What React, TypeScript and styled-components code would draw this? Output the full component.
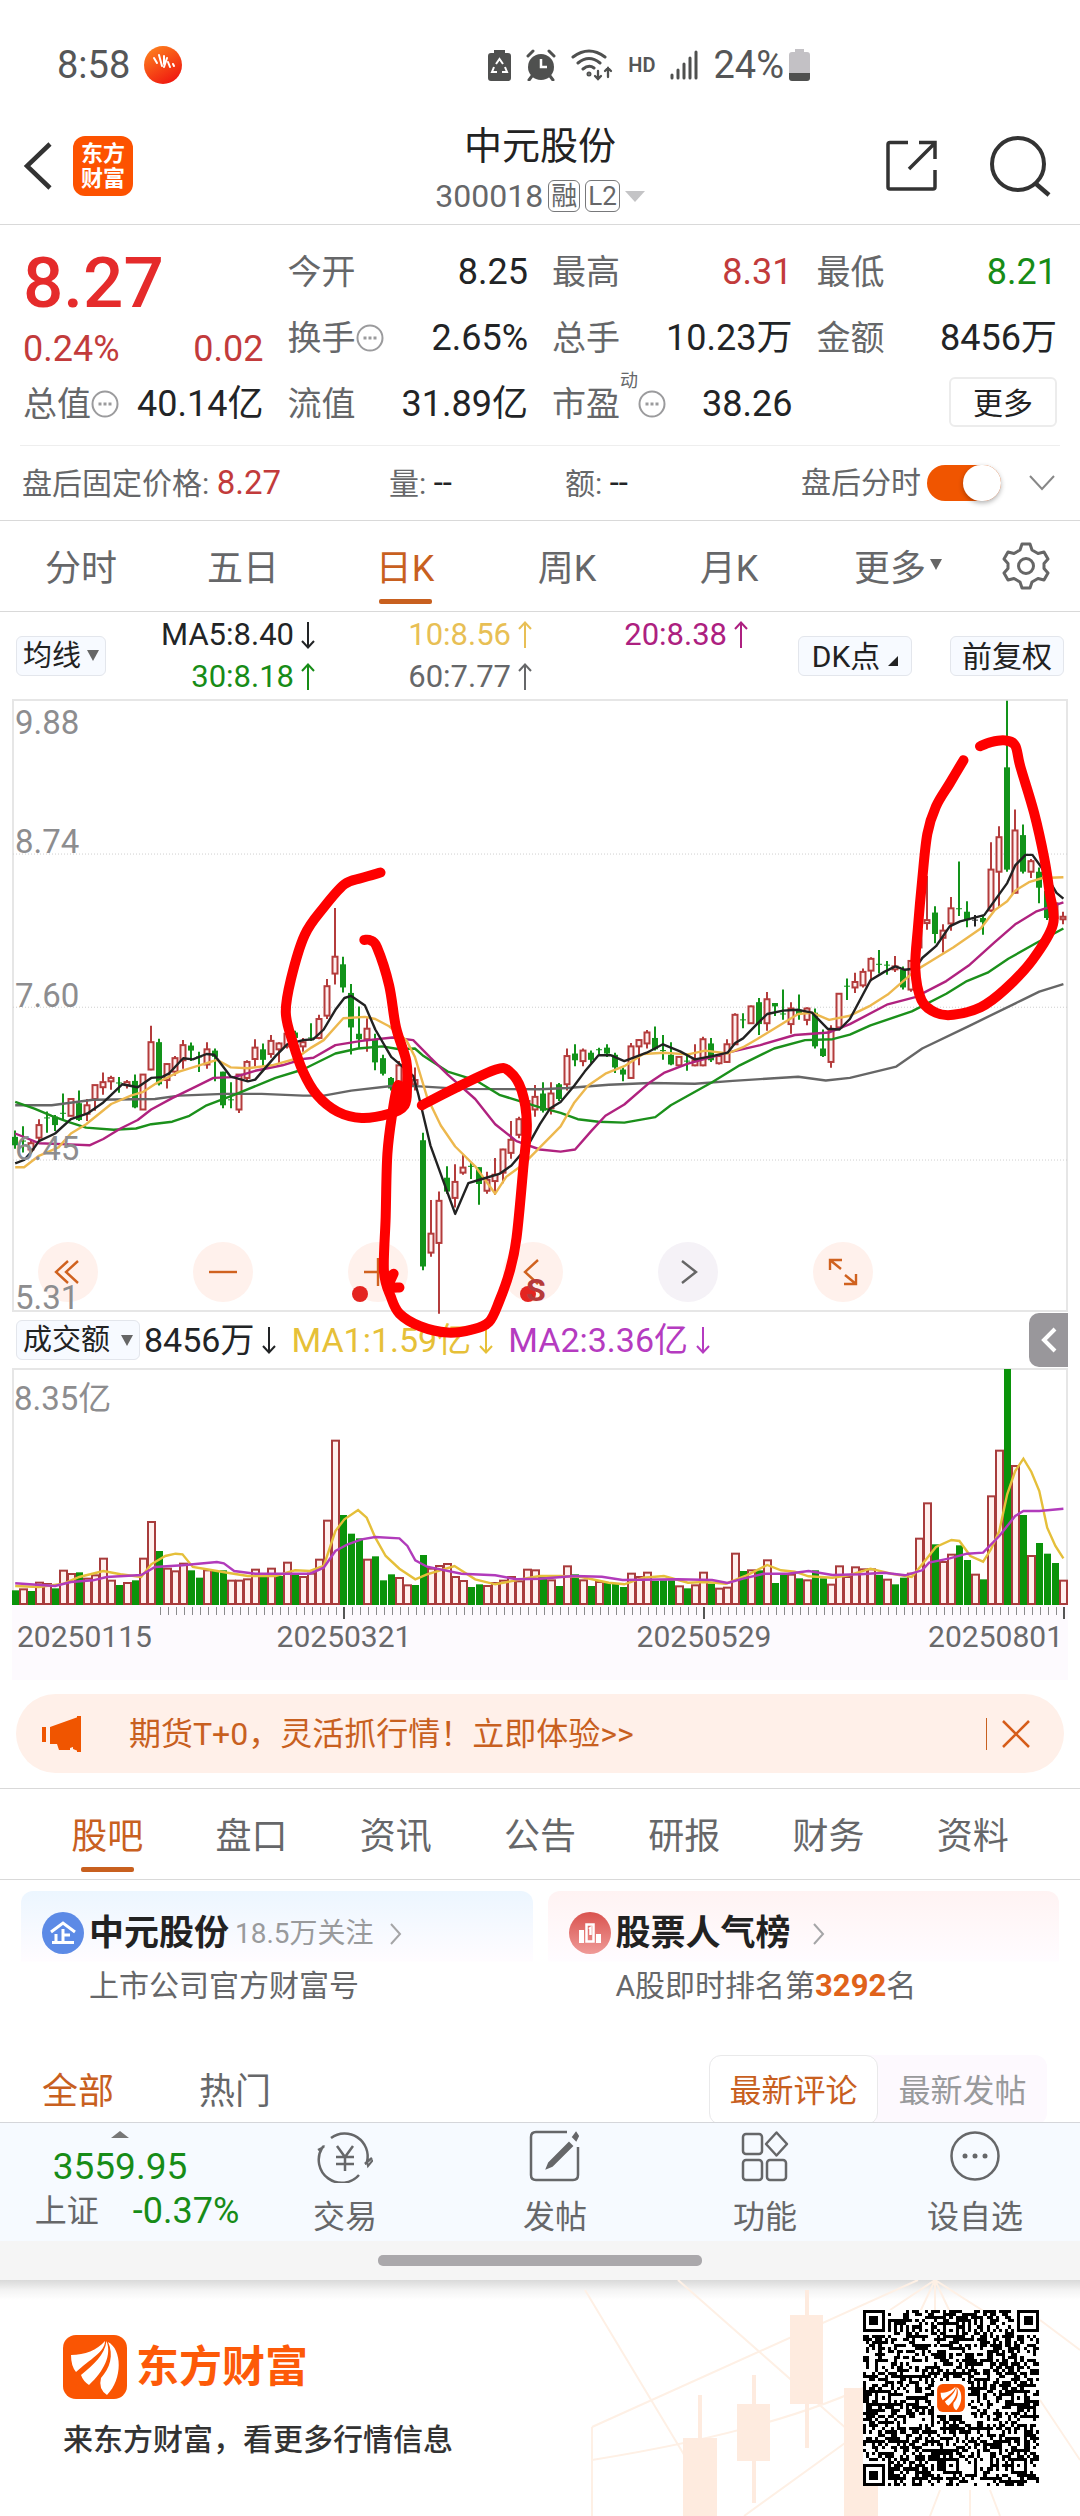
import React from "react";
import styled, { createGlobalStyle } from "styled-components";

const GlobalStyle = createGlobalStyle`
  * { box-sizing: border-box; }
  body {
    margin: 0;
    background: #fff;
    color: #222;
    font-family: Roboto, "Noto Sans CJK SC", sans-serif;
  }
  button, select, input { font-family: inherit; color: inherit; margin: 0; }
  button { background: none; border: 0; padding: 0; cursor: pointer; }
  svg { display: block; flex: none; }
`;

const c = {
  ink: "#222426",
  gray: "#666769",
  pale: "#999a9c",
  line: "#d9d9d9",
  orange: "#c8601f",
  vivid: "#f05500",
  red: "#c23b3b",
  green: "#178c17",
};

/* ---------- chart data ---------- */

type Candle = [kind: "r" | "g" | "x" | "k", open: number, close: number, high: number, low: number];

const CANDLES: Candle[] = [
  ["g", 1060, 1080, 1045, 1088], ["x", 1070, 1070, 1035, 1097], ["r", 1075, 1090, 1065, 1098], ["r", 1032, 1062, 1018, 1068],
  ["x", 1015, 1015, 1000, 1050], ["g", 1012, 1032, 1008, 1046], ["x", 1004, 1004, 957, 1018], ["r", 970, 1010, 968, 1010],
  ["g", 980, 1020, 950, 1022], ["r", 985, 1005, 970, 1022], ["r", 937, 970, 937, 998], ["r", 930, 942, 907, 960],
  ["r", 920, 928, 915, 948], ["x", 932, 932, 918, 955], ["r", 930, 937, 925, 945], ["g", 927, 990, 912, 992],
  ["r", 912, 995, 912, 995], ["r", 835, 900, 796, 902], ["g", 835, 935, 827, 938], ["r", 887, 925, 885, 945],
  ["r", 873, 905, 868, 915], ["r", 842, 878, 830, 898], ["g", 843, 855, 836, 880], ["x", 870, 870, 858, 906],
  ["r", 852, 888, 835, 898], ["g", 855, 870, 850, 928], ["g", 905, 985, 905, 992], ["x", 972, 972, 930, 992],
  ["r", 912, 995, 912, 1003], ["r", 882, 920, 878, 928], ["r", 848, 875, 828, 893], ["g", 852, 877, 838, 892],
  ["r", 832, 863, 818, 872], ["r", 838, 852, 835, 885], ["r", 815, 845, 808, 850], ["g", 812, 825, 808, 850],
  ["r", 835, 845, 825, 858], ["x", 825, 825, 790, 832], ["r", 780, 825, 770, 828], ["r", 702, 772, 685, 780],
  ["r", 632, 672, 516, 698], ["g", 650, 705, 632, 717], ["g", 718, 800, 697, 864], ["g", 815, 828, 750, 850],
  ["r", 803, 828, 778, 858], ["g", 828, 883, 815, 902], ["g", 873, 910, 865, 914], ["g", 920, 945, 918, 950],
  ["r", 890, 940, 880, 950], ["r", 900, 935, 895, 940], ["r", 925, 935, 895, 950], ["g", 1068, 1368, 1050, 1377],
  ["r", 1290, 1335, 1210, 1345], ["r", 1212, 1312, 1190, 1480], ["g", 1157, 1190, 1130, 1195], ["r", 1167, 1205, 1125, 1228],
  ["r", 1133, 1145, 1103, 1150], ["x", 1130, 1130, 1122, 1160], ["g", 1132, 1172, 1132, 1221], ["r", 1162, 1188, 1143, 1195],
  ["r", 1150, 1165, 1110, 1198], ["r", 1090, 1145, 1088, 1170], ["r", 1067, 1098, 1022, 1112], ["r", 1018, 1055, 1012, 1063],
  ["r", 975, 1020, 970, 1030], ["r", 965, 995, 937, 1012], ["g", 957, 998, 930, 1002], ["r", 957, 992, 930, 1007],
  ["g", 935, 970, 932, 975], ["r", 868, 935, 850, 950], ["g", 862, 878, 840, 892], ["r", 855, 880, 850, 892],
  ["g", 860, 877, 855, 885], ["x", 853, 853, 848, 865], ["g", 848, 862, 840, 870], ["g", 865, 895, 860, 908],
  ["g", 900, 912, 895, 928], ["r", 845, 920, 837, 922], ["r", 830, 845, 828, 890], ["r", 812, 838, 806, 850],
  ["g", 825, 852, 798, 855], ["x", 855, 855, 818, 877], ["g", 865, 888, 835, 890], ["r", 870, 890, 868, 892],
  ["x", 880, 880, 868, 903], ["r", 878, 890, 840, 892], ["r", 828, 890, 822, 892], ["g", 838, 878, 825, 882],
  ["r", 868, 885, 863, 888], ["r", 840, 882, 828, 884], ["r", 770, 840, 766, 842], ["x", 782, 782, 766, 802],
  ["r", 750, 790, 748, 792], ["g", 740, 792, 730, 818], ["r", 733, 790, 716, 808], ["g", 742, 750, 742, 773],
  ["x", 768, 768, 710, 782], ["r", 755, 792, 740, 815], ["g", 758, 768, 722, 782], ["r", 755, 782, 752, 795],
  ["g", 765, 845, 755, 850], ["g", 850, 868, 805, 870], ["r", 808, 882, 795, 896], ["r", 720, 800, 718, 806],
  ["x", 702, 702, 684, 735], ["r", 692, 705, 670, 718], ["r", 668, 700, 660, 705], ["r", 637, 665, 633, 690],
  ["x", 650, 650, 616, 672], ["x", 652, 652, 642, 675], ["r", 655, 662, 630, 668], ["g", 662, 705, 655, 710],
  ["r", 642, 710, 640, 715], ["r", 570, 610, 560, 615], ["r", 545, 552, 440, 568], ["g", 527, 578, 512, 600],
  ["r", 570, 587, 555, 622], ["r", 517, 553, 490, 570], ["x", 518, 518, 406, 535], ["g", 525, 545, 500, 562],
  ["k", 545, 545, 533, 560], ["g", 540, 550, 535, 580], ["r", 425, 522, 360, 525], ["r", 348, 430, 322, 515],
  ["g", 182, 425, 24, 430], ["r", 332, 480, 282, 482], ["g", 343, 430, 318, 434], ["r", 405, 430, 400, 445],
  ["g", 430, 468, 420, 505], ["g", 475, 540, 470, 545], ["r", 505, 540, 500, 545], ["r", 537, 543, 525, 555],
];

const VOLUME =
  "g868 r862 g870 r842 r846 g862 r806 r816 g814 r830 r820 r770 r836 g852 r843 g838 r770 r660 g750 r800 r808 r785 g808 g830 r805 g808 g808 r836 r836 r832 r803 g828 r800 g825 r782 g820 r825 r815 r773 r656 r416 g642 g698 g712 r773 g766 g838 g820 r828 r850 g852 g762 r800 r792 r786 r825 r837 g858 g850 r852 r843 r836 r825 r838 r803 r805 g822 r835 g855 r793 g820 r835 g855 r840 g845 g848 g858 r815 r825 r812 g840 g838 g838 r853 g862 r850 r812 g848 r860 r857 r755 g810 r805 g808 r775 g846 g822 r818 g832 r835 g808 g832 r848 r793 r825 r796 r802 r802 g822 r833 g850 g830 r815 r710 r604 g730 r780 r758 g733 g777 r818 g835 r583 r446 g204 r492 g642 r762 g726 g758 g786 r836"
    .split(" ")
    .map((s) => ({ up: s[0] === "r", top: Number(s.slice(1)) }));

const MA_LINES: { color: string; pts: string }[] = [
  { color: "#666", pts: "44,985 150,985 270,972 450,970 520,962 650,958 760,958 880,962 940,962 1020,950 1150,938 1220,940 1340,946 1568,947 1648,944 1768,936 1888,932 2018,934 2128,927 2318,917 2398,926 2468,920 2603,893 2678,850 2818,795 2968,735 3018,715 3088,697" },
  { color: "#1b901b", pts: "44,977 100,993 150,1010 200,1025 250,1038 330,1043 395,1040 439,1030 500,1024 550,1010 600,985 680,960 800,920 880,900 974,862 1040,850 1110,845 1160,852 1205,850 1230,868 1300,905 1380,925 1450,960 1568,990 1628,1003 1678,1018 1738,1024 1813,1026 1903,1013 1948,985 2068,930 2148,890 2248,850 2338,830 2418,828 2468,817 2528,795 2648,762 2748,720 2808,690 2868,670 2928,637 3008,600 3088,565" },
  { color: "#b0227f", pts: "44,1052 113,1075 200,1078 260,1080 300,1065 350,1040 400,1020 439,995 500,968 570,940 620,920 680,918 741,903 820,890 880,875 910,872 974,842 1050,832 1140,824 1200,830 1250,872 1300,912 1380,970 1438,1030 1500,1070 1568,1090 1628,1095 1670,1090 1718,1045 1758,1010 1813,983 1888,930 1928,908 1998,886 2113,860 2208,842 2308,818 2408,812 2468,792 2578,745 2658,728 2748,690 2813,653 2888,598 2948,555 3008,525 3088,503" },
  { color: "#edb84e", pts: "44,1132 70,1132 113,1105 170,1085 206,1052 250,1030 323,982 380,962 416,953 455,932 520,905 600,885 630,877 670,895 720,897 790,890 857,875 904,848 940,830 997,778 1060,775 1090,780 1130,797 1180,830 1205,870 1240,965 1280,1033 1322,1083 1380,1130 1438,1195 1470,1155 1520,1125 1568,1085 1598,1060 1628,1035 1668,978 1708,938 1758,910 1813,892 1868,863 1928,860 1998,864 2048,855 2113,862 2158,847 2198,828 2248,803 2318,768 2358,765 2408,782 2468,772 2528,748 2578,722 2658,665 2698,645 2768,610 2848,565 2888,522 2925,500 2948,475 2988,455 3028,445 3088,443" },
  { color: "#222", pts: "44,1123 70,1115 90,1097 113,1070 160,1052 206,1018 253,1005 300,978 323,960 355,935 400,942 439,920 470,918 490,910 532,873 560,876 600,863 622,865 670,917 720,928 741,924 800,868 834,840 880,830 910,828 940,805 974,758 1000,730 1020,725 1060,748 1090,805 1136,870 1165,890 1200,915 1215,960 1250,1080 1322,1243 1360,1170 1400,1160 1450,1148 1485,1128 1530,1085 1568,1030 1598,992 1628,977 1668,938 1698,905 1738,866 1773,866 1813,880 1878,860 1925,840 1975,857 2018,876 2068,868 2113,860 2135,837 2158,826 2198,792 2228,768 2274,760 2318,758 2358,765 2403,803 2438,805 2468,780 2528,688 2568,668 2600,655 2628,663 2658,660 2678,635 2718,607 2758,560 2788,548 2858,533 2925,457 2948,415 2978,390 2998,390 3023,418 3068,480 3088,494" },
];

const VOL_LINES = [
  { color: "#e5bf3a", pts: "44,855 113,858 185,848 230,828 300,810 350,820 410,828 439,790 480,765 510,758 530,760 560,798 600,805 660,815 720,825 800,825 857,808 900,810 940,795 974,690 1000,655 1040,627 1065,650 1090,710 1120,765 1160,803 1206,835 1240,820 1320,795 1380,835 1438,850 1530,832 1568,825 1628,825 1688,828 1768,845 1813,850 1868,830 1928,825 1998,845 2048,843 2108,848 2168,823 2228,792 2268,808 2308,812 2348,826 2418,830 2468,822 2528,803 2588,818 2648,828 2678,790 2718,738 2763,717 2786,720 2818,765 2855,782 2878,745 2902,690 2925,580 2948,510 2972,473 2995,512 3018,570 3041,680 3065,735 3088,772" },
  { color: "#b13bbb", pts: "44,847 160,855 206,843 270,838 310,828 410,822 450,798 530,793 630,783 650,787 680,810 741,818 900,818 940,800 974,750 1010,730 1050,715 1090,708 1160,712 1183,735 1206,778 1240,797 1340,818 1438,823 1500,835 1568,833 1668,825 1748,827 1808,837 1968,835 2068,837 2113,846 2158,833 2218,818 2288,818 2348,810 2418,822 2498,820 2568,815 2628,823 2678,808 2698,785 2758,772 2808,758 2855,755 2902,705 2948,645 2972,630 3018,630 3088,623" },
];

const MARKS = [
  "1105,432 1050,445 1000,460 940,515 885,580 845,685 830,765 850,835 880,905 920,960 980,1000 1050,1015 1130,1005 1175,985 1182,940 1180,880 1150,800 1130,700 1095,610 1075,593 1058,592",
  "1225,985 1320,945 1440,900 1480,905 1515,950 1530,1030 1520,1130 1500,1300 1480,1380 1450,1450 1420,1500 1370,1518 1300,1525 1220,1510 1160,1480 1135,1440 1115,1380 1120,1250 1125,1100 1140,1000 1155,938 1170,960 1155,985",
  "1143,1385 1130,1415 1160,1418",
  "2798,165 2758,220 2718,275 2693,340 2678,450 2666,560 2658,660 2676,735 2718,765 2768,770 2848,752 2918,710 2998,640 3058,555 3048,480 3033,400 3003,290 2963,180 2948,130 2918,118 2878,122 2846,132",
];

/* Data is kept on a fine grid; these bring it to drawing units. */
const px = (x: number) => x / 2.904 - 12;
const priceY = (v: number) => (v - 22) / 2.376 + 1;
const volY = (v: number) => (v - 204) / 3 + 1;
const barX = (i: number) => 3 + i * 8;

const linePath = (pts: string, y: (v: number) => number) =>
  "M" + pts.split(" ").map((p) => {
    const [a, b] = p.split(",").map(Number);
    return `${px(a).toFixed(1)} ${y(b).toFixed(1)}`;
  }).join("L");

const smoothPath = (pts: string) => {
  const p = pts.split(" ").map((s) => {
    const [a, b] = s.split(",").map(Number);
    return [px(a), priceY(b)];
  });
  let d = `M${p[0][0]} ${p[0][1]}`;
  for (let i = 0; i < p.length - 1; i++) {
    const p0 = p[i - 1] || p[i], p1 = p[i], p2 = p[i + 1], p3 = p[i + 2] || p2;
    d += `C${p1[0] + (p2[0] - p0[0]) / 6} ${p1[1] + (p2[1] - p0[1]) / 6} ${p2[0] - (p3[0] - p1[0]) / 6} ${p2[1] - (p3[1] - p1[1]) / 6} ${p2[0]} ${p2[1]}`;
  }
  return d;
};

/* ---------- layout parts ---------- */

const Page = styled.main`
  width: 100%;
  display: flex;
  flex-direction: column;
  overflow: hidden;
`;

const StatusBar = styled.div`
  display: flex;
  align-items: center;
  height: 108px;
  padding: 22px 270px 0 57px;
  color: #555657;
  font-size: 38px;
  line-height: 44px;
`;
const StatusIcons = styled.div`
  margin-left: auto;
  display: flex;
  align-items: center;
  gap: 15px;
`;
const StatusApp = styled.span`
  margin-left: 14px;
`;
const HdMark = styled.span`
  font-size: 20px;
  font-weight: 600;
  line-height: 24px;
`;
const Battery = styled.span`
  display: flex;
  align-items: center;
  gap: 5px;
`;

const Header = styled.header`
  display: flex;
  align-items: center;
  height: 117px;
  padding: 0 22px;
  border-bottom: 1px solid ${c.line};
`;
const HeaderSide = styled.div<{ $end?: boolean }>`
  flex: 1;
  display: flex;
  align-items: center;
  justify-content: ${(p) => (p.$end ? "flex-end" : "flex-start")};
  gap: ${(p) => (p.$end ? "52px" : "19px")};
  & > :last-child { margin-right: 6px; }
`;
const AppBadge = styled.a`
  width: 60px;
  height: 60px;
  border-radius: 12px;
  background: #fd5200;
  color: #fff;
  text-decoration: none;
  font-size: 22px;
  font-weight: 700;
  line-height: 25px;
  display: flex;
  flex-direction: column;
  justify-content: center;
  align-items: center;
`;
const TitleBlock = styled.div`
  display: flex;
  flex-direction: column;
  align-items: center;
  padding-top: 10px;
`;
const StockName = styled.h1`
  margin: 0;
  font-size: 38px;
  font-weight: 400;
  line-height: 50px;
`;
const CodeLine = styled.div`
  display: flex;
  align-items: center;
  gap: 5px;
  font-size: 32px;
  line-height: 50px;
  color: ${c.gray};
`;
const Tag = styled.span`
  border: 1px solid #77787a;
  border-radius: 6px;
  height: 32px;
  padding: 0 2px;
  font-size: 26px;
  line-height: 30px;
`;

const Quote = styled.section`
  display: grid;
  grid-template-columns: repeat(4, 1fr);
  grid-auto-rows: 66px;
  column-gap: 24px;
  padding: 14px 23px 8px;
`;
const PriceCell = styled.div`
  grid-row: span 2;
  color: ${c.red};
`;
const Price = styled.div`
  color: #e52b2b;
  font-size: 71px;
  font-weight: 500;
  line-height: 88px;
`;
const Change = styled.div`
  display: flex;
  justify-content: space-between;
  font-size: 36px;
  line-height: 44px;
`;
const Cell = styled.div`
  display: flex;
  align-items: center;
  font-size: 34px;
  line-height: 66px;
  color: ${c.gray};
  white-space: nowrap;
`;
const CellValue = styled.span<{ $color?: string }>`
  margin-left: auto;
  font-size: 36px;
  color: ${(p) => p.$color || c.ink};
`;
const Sup = styled.sup`
  font-size: 18px;
  line-height: 20px;
  align-self: flex-start;
`;
const MoreCell = styled.div`
  display: flex;
  align-items: center;
  justify-content: flex-end;
`;
const MoreButton = styled.button`
  width: 108px;
  height: 50px;
  margin-bottom: 4px;
  padding-bottom: 3px;
  border: 2px solid #ececec;
  border-radius: 6px;
  font-size: 30px;
`;

const AfterHours = styled.section`
  display: grid;
  grid-template-columns: 367px 176px 1fr auto;
  align-items: center;
  height: 75px;
  margin: 0 20px;
  padding-left: 2px;
  border-top: 1px solid #eee;
  font-size: 30px;
  line-height: 40px;
  color: ${c.gray};
`;
const AfterValue = styled.span<{ $up?: boolean }>`
  font-size: 33px;
  color: ${(p) => (p.$up ? c.red : c.ink)};
`;
const SwitchLine = styled.div`
  display: flex;
  align-items: center;
  gap: 6px;
`;
const Switch = styled.input`
  appearance: none;
  width: 74px;
  height: 36px;
  border-radius: 18px;
  background: ${c.vivid};
  display: flex;
  justify-content: flex-end;
  &::before {
    content: "";
    width: 38px;
    height: 36px;
    border-radius: 18px;
    background: #fff;
    box-shadow: 0 2px 5px rgba(0, 0, 0, 0.3);
  }
`;
const IconButton = styled.button`
  display: flex;
  align-items: center;
  justify-content: center;
`;
const ExpandButton = styled(IconButton)`
  margin: 0 5px 0 22px;
`;

const TabBar = styled.nav<{ $pad: number }>`
  display: flex;
  height: 92px;
  padding: 0 ${(p) => p.$pad}px;
  border-top: 1px solid ${c.line};
  border-bottom: 1px solid ${c.line};
`;
const Tab = styled.button<{ $on?: boolean }>`
  flex: 3 1 0;
  display: flex;
  align-items: center;
  justify-content: center;
  gap: 4px;
  padding-bottom: 3px;
  font-size: 36px;
  color: ${(p) => (p.$on ? c.orange : c.gray)};
  position: relative;
  & > svg { margin-right: -14px; }
  &::after {
    content: "";
    display: ${(p) => (p.$on ? "block" : "none")};
    position: absolute;
    bottom: 7px;
    width: 53px;
    height: 5px;
    border-radius: 2px;
    background: ${c.orange};
  }
`;
const GearButton = styled(IconButton)`
  flex: 2 1 0;
`;

const MaBar = styled.section`
  display: flex;
  align-items: center;
  height: 87px;
  padding: 0 16px;
`;
const SelectBox = styled.label<{ $wide?: boolean }>`
  display: flex;
  align-items: center;
  justify-content: space-between;
  width: ${(p) => (p.$wide ? "124px" : "90px")};
  height: 40px;
  padding: 0 6px;
  border: 1px solid #e3e6ec;
  border-radius: 6px;
  background: #f7faff;
`;
const BareSelect = styled.select`
  appearance: none;
  border: 0;
  padding: 0;
  background: none;
  font-size: 29px;
  line-height: 38px;
`;
const MaGrid = styled.div`
  flex: 1;
  display: grid;
  grid-template-columns: 209fr 217fr 216fr;
  grid-auto-rows: 42px;
`;
const MaValue = styled.span<{ $color: string }>`
  display: flex;
  align-items: center;
  justify-content: flex-end;
  gap: 7px;
  font-size: 31px;
  line-height: 42px;
  color: ${(p) => p.$color};
`;
const ChipRow = styled.div`
  display: flex;
  gap: 38px;
  margin-left: 50px;
`;
const Chip = styled.button`
  display: flex;
  align-items: center;
  justify-content: center;
  gap: 8px;
  width: 114px;
  height: 40px;
  padding-bottom: 3px;
  border: 1px solid #e3e6ec;
  border-radius: 6px;
  background: #f7faff;
  font-size: 30px;
  white-space: nowrap;
`;

const Charts = styled.section`
  position: relative;
  margin: 0 12px;
`;
const ChartSvg = styled.svg`
  width: 100%;
  height: auto;
  overflow: visible;
`;
const PlotArea = styled.div`
  position: relative;
`;
const PlotOverlay = styled(ChartSvg)`
  position: absolute;
  inset: 0;
  pointer-events: none;
`;
const PlotControls = styled.div`
  position: absolute;
  left: 26px;
  bottom: 10px;
  display: flex;
  gap: 95px;
`;
const RoundButton = styled.button<{ $muted?: boolean }>`
  width: 60px;
  height: 60px;
  border-radius: 30px;
  display: flex;
  align-items: center;
  justify-content: center;
  color: ${(p) => (p.$muted ? "#666" : "#d0621f")};
  background: ${(p) => (p.$muted ? "#f5f2f7" : "#fff1ec")};
`;
const VolumeBar = styled.div`
  display: flex;
  align-items: center;
  height: 56px;
  padding-left: 4px;
  gap: 4px;
`;
const VolumeValue = styled.span<{ $color: string }>`
  display: flex;
  align-items: center;
  gap: 8px;
  margin-right: 11px;
  font-size: 34px;
  line-height: 44px;
  color: ${(p) => p.$color};
`;
const Collapse = styled.button`
  display: flex;
  align-items: center;
  justify-content: center;
  width: 39px;
  height: 54px;
  margin-left: auto;
  border-radius: 10px 0 0 10px;
  background: #99979b;
  color: #fff;
`;

const Banner = styled.aside`
  display: flex;
  align-items: center;
  height: 79px;
  margin: 14px 16px 15px;
  padding: 0 34px 0 25px;
  border-radius: 40px;
  background: #fff0e9;
  color: ${c.orange};
`;
const BannerLink = styled.a`
  flex: 1;
  margin-left: 46px;
  color: inherit;
  text-decoration: none;
  font-size: 32px;
  line-height: 44px;
`;
const BannerClose = styled(IconButton)`
  height: 32px;
  padding-left: 15px;
  border-left: 1px solid ${c.orange};
`;

const Cards = styled.section`
  display: grid;
  grid-template-columns: 1fr 1fr;
  gap: 15px;
  padding: 11px 21px 0;
`;
const Card = styled.a<{ $tint: string }>`
  display: grid;
  grid-template-columns: 42px 1fr;
  column-gap: 5px;
  row-gap: 10px;
  padding: 21px 20px 0 21px;
  border-radius: 12px;
  color: inherit;
  text-decoration: none;
  background: linear-gradient(${(p) => p.$tint}, #fffcff 70px, #fff 71px);
`;
const CardTitle = styled.div`
  display: flex;
  align-items: center;
  font-size: 35px;
  font-weight: 600;
  line-height: 44px;
`;
const CardNote = styled.span`
  margin: 0 16px 0 6px;
  font-size: 28px;
  font-weight: 400;
  color: ${c.pale};
`;
const CardSub = styled.div`
  grid-column: 2;
  font-size: 30px;
  line-height: 40px;
  color: ${c.gray};
`;
const Rank = styled.b`
  color: #e0621a;
  font-size: 31px;
  font-weight: 700;
`;

const FilterRow = styled.section`
  display: flex;
  height: 67px;
  margin-top: 49px;
  padding: 0 33px 0 42px;
  gap: 85px;
  overflow: hidden;
`;
const Filter = styled.button<{ $on?: boolean }>`
  height: 70px;
  padding-bottom: 5px;
  font-size: 36px;
  color: ${(p) => (p.$on ? c.orange : c.gray)};
`;
const Sorts = styled.div`
  display: flex;
  height: 70px;
  margin-left: auto;
  border-radius: 12px;
  background: #fdf9fe;
`;
const Sort = styled.button<{ $on?: boolean }>`
  width: 169px;
  height: 70px;
  padding-bottom: 5px;
  font-size: 32px;
  border: 1px solid ${(p) => (p.$on ? "#e9e9ea" : "transparent")};
  border-radius: 12px;
  background: ${(p) => (p.$on ? "#fff" : "none")};
  color: ${(p) => (p.$on ? c.orange : c.pale)};
`;

const BottomNav = styled.nav`
  display: grid;
  grid-template-columns: 240px repeat(4, 1fr);
  height: 119px;
  border-top: 1px solid #d5d6da;
  background: #f6faff;
`;
const IndexBlock = styled.button`
  display: flex;
  flex-direction: column;
  align-items: center;
  justify-content: flex-start;
  gap: 1px;
  padding-top: 8px;
  color: ${c.green};
  font-size: 37px;
  line-height: 44px;
`;
const IndexMark = styled.svg`
  margin-bottom: 5px;
`;
const IndexLine = styled.span`
  display: flex;
  gap: 34px;
  padding-left: 34px;
  font-size: 36px;
  line-height: 42px;
  white-space: nowrap;
`;
const IndexName = styled.span`
  font-size: 32px;
  color: ${c.gray};
`;
const NavItem = styled.button`
  display: flex;
  flex-direction: column;
  align-items: center;
  gap: 12px;
  padding-top: 6px;
  font-size: 32px;
  line-height: 44px;
  color: ${c.gray};
`;
const HomeBar = styled.div`
  display: flex;
  justify-content: center;
  height: 39px;
  padding-top: 14px;
  background: #f5f5f5;
  &::after {
    content: "";
    width: 324px;
    height: 11px;
    border-radius: 5px;
    background: #aaa8ab;
  }
`;

const Footer = styled.footer`
  position: relative;
  display: flex;
  justify-content: space-between;
  align-items: flex-start;
  height: 236px;
  padding: 30px 41px 0 63px;
  background: linear-gradient(#d9d9d9, #f3f3f3 10px, #fff 20px);
`;
const FooterArt = styled.svg`
  position: absolute;
  right: 0;
  top: 0;
`;
const FooterText = styled.div`
  padding-top: 25px;
`;
const Brand = styled.div`
  display: flex;
  align-items: center;
  gap: 9px;
  font-size: 43px;
  font-weight: 700;
  line-height: 64px;
  color: #fd5a08;
`;
const Slogan = styled.p`
  margin: 19px 0 0;
  font-size: 30px;
  font-weight: 500;
  line-height: 44px;
  color: #333;
`;
const QrWrap = styled.div`
  position: relative;
`;

/* ---------- small drawings ---------- */

const Info = () => (
  <svg width="28" height="28" viewBox="0 0 28 28" fill="none" stroke="#9b9b9d" strokeWidth="2">
    <circle cx="14" cy="14" r="12.5" />
    <path d="M7.5 14h3M12.5 14h3M17.5 14h3" strokeWidth="3" />
  </svg>
);
const Arrow = ({ up }: { up?: boolean }) => (
  <svg width="14" height="28" viewBox="0 0 14 28" fill="none" stroke="currentColor" strokeWidth="2">
    <path d={up ? "M7 27V1M1 8L7 1.500L13 8" : "M7 1V27M1 20L7 26.500L13 20"} />
  </svg>
);
const Down = ({ w = 12, color = "#666" }: { w?: number; color?: string }) => (
  <svg width={w} height="11" viewBox="0 0 12 11" preserveAspectRatio="none"><path d="M0 0H12L6 11Z" fill={color} /></svg>
);
const ChevronRight = () => (
  <svg width="12" height="22" viewBox="0 0 12 22" fill="none" stroke="#a5a5a7" strokeWidth="2"><path d="M1 1L10 11L1 21" /></svg>
);
const Feather = ({ size }: { size: number }) => (
  <svg width={size} height={size} viewBox="0 0 64 64">
    <rect width="64" height="64" rx="13" fill="#fa5503" />
    <path d="M8 20C22 20 34 15 42 6C42 17 27 24 13 37Q8 31 8 20Z" fill="#fff" />
    <path d="M18 40C30 30 42 20 43.500 6C49 20 41 36 26 50Q20 46 18 40Z" fill="#fff" />
    <path d="M45 7C59 14 60 44 44 60Q35 54 38 43C47 33 51 20 45 7Z" fill="#fff" />
  </svg>
);

const QR_N = 57;
const qrPath = (() => {
  let seed = 20250801;
  const rnd = () => {
    seed = (seed * 1103515245 + 12345) % 2147483648;
    return seed / 2147483648;
  };
  const ring = (x: number, y: number, cx: number, cy: number) => Math.max(Math.abs(x - cx), Math.abs(y - cy));
  const finders = [[3, 3], [53, 3], [3, 53]];
  const aligns = [[28, 6], [50, 28], [6, 28], [28, 50], [50, 50]];
  let d = "";
  for (let y = 0; y < QR_N; y++) {
    for (let x = 0; x < QR_N; x++) {
      let on = rnd() > 0.5;
      if (y === 6 || x === 6) on = (x + y) % 2 === 0;
      for (const [a, b] of aligns) {
        const r = ring(x, y, a, b);
        if (r <= 2) on = r !== 1;
      }
      for (const [a, b] of finders) {
        const r = ring(x, y, a, b);
        if (r <= 4) on = r < 2 || r === 3;
      }
      if (on) d += `M${x} ${y}h1v1h-1z`;
    }
  }
  return d;
})();

const QrCode = () => (
  <QrWrap>
    <svg width="176" height="176" viewBox="0 0 57 57" role="img" aria-label="QR" shapeRendering="crispEdges">
      <rect width="57" height="57" fill="#fff" />
      <path d={qrPath} />
      <rect x="23" y="23" width="11" height="11" rx="1" fill="#fff" />
      <svg x="24" y="24" width="9" height="9" viewBox="0 0 64 64" shapeRendering="auto"><Feather size={64} /></svg>
    </svg>
  </QrWrap>
);

const PriceChart = () => (
  <ChartSvg viewBox="0 0 1056 613">
    <rect x="1" y="1" width="1054" height="611" fill="none" stroke="#e6e6e6" strokeWidth="2" />
    {[388, 752, 1115].map((v) => (
      <path key={v} d={`M1 ${priceY(v)}H1055`} stroke="#cfcfcf" strokeDasharray="1 2" />
    ))}
  </ChartSvg>
);

const PriceSeries = () => (
  <PlotOverlay viewBox="0 0 1056 613">
    {CANDLES.map(([kind, open, close, high, low], i) => {
      const x = barX(i);
      const col = kind === "r" ? "#b43c3c" : kind === "k" ? "#222" : "#12931a";
      const top = priceY(open), bottom = priceY(close);
      return (
        <g key={i} stroke={col} strokeWidth="2">
          {kind === "r" ? (
            <>
              <path d={`M${x} ${priceY(high)}V${top}M${x} ${bottom}V${priceY(low)}`} />
              <rect x={x - 2.5} y={top} width="5" height={Math.max(bottom - top, 2)} fill="#fff0f0" />
            </>
          ) : (
            <>
              <path d={`M${x} ${priceY(high)}V${priceY(low)}`} />
              {kind === "g" ? <path d={`M${x} ${top}V${bottom}`} strokeWidth="6" /> : <path d={`M${x - 3} ${top}H${x + 3}`} strokeWidth="1" />}
            </>
          )}
        </g>
      );
    })}
    {MA_LINES.map((l) => (
      <path key={l.color} d={linePath(l.pts, priceY)} fill="none" stroke={l.color} strokeWidth="2.4" strokeLinejoin="round" />
    ))}
    <g fill="#8d8d8f" fontSize="33">
      <text x="3" y="35">9.88</text>
      <text x="3" y="154">8.74</text>
      <text x="3" y="308">7.60</text>
      <text x="3" y="461">6.45</text>
      <text x="3" y="610">5.31</text>
    </g>
    <circle cx="348" cy="595" r="8" fill="#e42420" />
    <circle cx="516" cy="595" r="8" fill="#e42420" />
    <text x="514" y="602" fontSize="32" fontWeight="700" fill="#b63a3a">S</text>
  </PlotOverlay>
);

const VolumeChart = () => (
  <ChartSvg viewBox="0 0 1056 312">
    <rect x="0" y="237" width="1056" height="75" fill="#fdfafe" />
    <path d="M1 236V1H1055V236" fill="none" stroke="#e6e6e6" strokeWidth="2" />
    {VOLUME.map((v, i) => {
      const x = barX(i), y = volY(v.top);
      return v.up ? (
        <rect key={i} x={x - 3} y={y + 1} width="7" height={235 - y} fill="#fff0ee" stroke="#a83c3c" strokeWidth="2" />
      ) : (
        <rect key={i} x={x - 3} y={y} width="7" height={237 - y} fill="#0a930a" />
      );
    })}
    {VOL_LINES.map((l) => (
      <path key={l.color} d={linePath(l.pts, volY)} fill="none" stroke={l.color} strokeWidth="2.4" />
    ))}
    <path
      d={Array.from({ length: 113 }, (_, k) => `M${148.5 + k * 8} 239v8`).join("")}
      stroke="#8b8b8d"
    />
    <path d="M332 239v12M692 239v12M1052 239v12" stroke="#555" strokeWidth="2" />
    <text x="2" y="42" fontSize="33" fill="#8d8d8f">8.35亿</text>
    <g fill="#69696b" fontSize="30">
      <text x="5" y="279">20250115</text>
      <text x="332" y="279" textAnchor="middle">20250321</text>
      <text x="692" y="279" textAnchor="middle">20250529</text>
      <text x="1051" y="279" textAnchor="end">20250801</text>
    </g>
  </ChartSvg>
);

const Stat = ({ label, value, color, info, sup }: { label: string; value: string; color?: string; info?: boolean; sup?: string }) => (
  <Cell>
    {label}
    {sup && <Sup>{sup}</Sup>}
    {info && <Info />}
    <CellValue $color={color}>{value}</CellValue>
  </Cell>
);

const CONTROLS: { name: string; d: string; muted?: boolean }[] = [
  { name: "最早", d: "M15 4L3 15L15 26M25 4L13 15L25 26" },
  { name: "缩小", d: "M1 15H29" },
  { name: "放大", d: "M1 15H29M15 1V29" },
  { name: "向左", d: "M20 3L7 15L20 27" },
  { name: "向右", d: "M9 4L23 15L9 26", muted: true },
  { name: "全屏", d: "M2 13V3H14M2 3L13 12M28 17V27H16M28 27L17 18" },
];

const NAV: { label: string; art: React.ReactNode }[] = [
  {
    label: "交易",
    art: (
      <>
        <path d="M14 9A23 23 0 0 1 50 33L55 29M50 33L48 35" />
        <path d="M50 33L51 37L56 31" strokeWidth="2" />
        <path d="M42 46A23 23 0 0 1 5 19L1 21M5 19L7 17" />
        <path d="M20 17L28 28L36 17M28 28V42M19 28H37M19 35H37" />
      </>
    ),
  },
  {
    label: "发帖",
    art: (
      <>
        <path d="M40 3H9Q4 3 4 8V46Q4 51 9 51H46Q51 51 51 46V18" />
        <path d="M42 14L45 17L25 37L20 39L22 34ZM46 8L49 4L51 7L49 11Z" fill="currentColor" strokeWidth="2" />
      </>
    ),
  },
  {
    label: "功能",
    art: (
      <>
        <rect x="6" y="5" width="19" height="20" rx="3" />
        <rect x="6" y="31" width="19" height="20" rx="3" />
        <rect x="30" y="31" width="19" height="20" rx="3" />
        <path d="M39.500 3.500L50 15L39.500 26.500L29 15Z" strokeLinejoin="round" />
      </>
    ),
  },
  {
    label: "设自选",
    art: (
      <>
        <circle cx="28" cy="27" r="23.500" />
        <g fill="currentColor" stroke="none">
          <circle cx="18" cy="27" r="2.500" /><circle cx="28" cy="27" r="2.500" /><circle cx="38" cy="27" r="2.500" />
        </g>
      </>
    ),
  },
];

export default function App() {
  return (
    <Page>
      <GlobalStyle />
      <StatusBar>
        8:58
        <StatusApp>
          <svg width="38" height="38" viewBox="0 0 38 38">
            <defs><linearGradient id="ball" x1="0" y1="0" x2="0.6" y2="1"><stop stopColor="#ff8a1f" /><stop offset="1" stopColor="#f01c10" /></linearGradient></defs>
            <circle cx="19" cy="19" r="19" fill="url(#ball)" />
            <path d="M10 12L13 17M15 9L18 20M20 10L20 18M20 21L23 12M24 16L26 21M29 18L30 20" stroke="#fff" strokeWidth="2" strokeLinecap="round" />
          </svg>
        </StatusApp>
        <StatusIcons>
          <svg width="23" height="33" viewBox="0 0 23 33">
            <path d="M6 4V1H17V4H20Q23 4 23 7V29Q23 32 20 32H3Q0 32 0 29V7Q0 4 3 4Z" fill="#4f504f" />
            <path d="M8 15L11.500 10L15 15M17 18L19 23H14M9 23H4L6 18" fill="none" stroke="#fff" strokeWidth="2" />
          </svg>
          <svg width="30" height="32" viewBox="0 0 30 32">
            <circle cx="15" cy="18" r="13" fill="#4f504f" />
            <path d="M2 7L7 2M28 7L23 2M6 27L3 31M24 27L27 31" stroke="#4f504f" strokeWidth="3" strokeLinecap="round" />
            <path d="M15 10V18H21" fill="none" stroke="#fff" strokeWidth="2.500" />
          </svg>
          <svg width="42" height="32" viewBox="0 0 42 32" fill="none" stroke="#4f504f" strokeWidth="3" strokeLinecap="round">
            <path d="M2 8Q18 -4 34 8M7 14Q18 5 29 14M12 20Q18 15 23 19" />
            <circle cx="18" cy="25" r="1" />
            <path d="M27 22V30M24 27L27 30L30 27M37 28V19M34 22L37 19L40 22" strokeWidth="2.300" />
          </svg>
          <HdMark>HD</HdMark>
          <svg width="28" height="30" viewBox="0 0 28 30" stroke="#4f504f" strokeWidth="3" strokeLinecap="round">
            <path d="M2 25V28M8 20V28M14 14V28M20 8V28M26 2V28" />
          </svg>
          <Battery>
            24%
            <svg width="21" height="32" viewBox="0 0 21 32">
              <path d="M6 3V0H15V3H18Q21 3 21 6V24H0V6Q0 3 3 3Z" fill="#c3c1c5" />
              <path d="M0 24H21V29Q21 32 18 32H3Q0 32 0 29Z" fill="#4f504f" />
            </svg>
          </Battery>
        </StatusIcons>
      </StatusBar>

      <Header>
        <HeaderSide>
          <IconButton aria-label="返回">
            <svg width="32" height="50" viewBox="0 0 32 50" fill="none" stroke="#333" strokeWidth="4.500"><path d="M28 3L5 25L28 47" /></svg>
          </IconButton>
          <AppBadge href="#home"><span>东方</span><span>财富</span></AppBadge>
        </HeaderSide>
        <TitleBlock>
          <StockName>中元股份</StockName>
          <CodeLine>
            300018
            <Tag>融</Tag>
            <Tag>L2</Tag>
            <Down w={20} color="#c4c4c6" />
          </CodeLine>
        </TitleBlock>
        <HeaderSide $end>
          <IconButton aria-label="分享">
            <svg width="52" height="52" viewBox="0 0 52 52" fill="none" stroke="#333" strokeWidth="3.500">
              <path d="M22 2.500H4Q2 2.500 2 4.500V47Q2 49 4 49H47Q49 49 49 47V30M33 2.500H49V19M49 3L23 29" />
            </svg>
          </IconButton>
          <IconButton aria-label="搜索">
            <svg width="62" height="62" viewBox="0 0 62 62" fill="none" stroke="#333" strokeWidth="4">
              <circle cx="28" cy="29" r="26" /><path d="M45 48L59 60" strokeWidth="4.500" />
            </svg>
          </IconButton>
        </HeaderSide>
      </Header>

      <Quote>
        <PriceCell>
          <Price>8.27</Price>
          <Change><span>0.24%</span><span>0.02</span></Change>
        </PriceCell>
        <Stat label="今开" value="8.25" />
        <Stat label="最高" value="8.31" color={c.red} />
        <Stat label="最低" value="8.21" color={c.green} />
        <Stat label="换手" value="2.65%" info />
        <Stat label="总手" value="10.23万" />
        <Stat label="金额" value="8456万" />
        <Stat label="总值" value="40.14亿" info />
        <Stat label="流值" value="31.89亿" />
        <Stat label="市盈" value="38.26" info sup="动" />
        <MoreCell><MoreButton>更多</MoreButton></MoreCell>
      </Quote>

      <AfterHours>
        <span>盘后固定价格: <AfterValue $up>8.27</AfterValue></span>
        <span>量: <AfterValue>--</AfterValue></span>
        <span>额: <AfterValue>--</AfterValue></span>
        <SwitchLine>
          <label htmlFor="after">盘后分时</label>
          <Switch id="after" type="checkbox" defaultChecked />
          <ExpandButton aria-label="展开">
            <svg width="26" height="16" viewBox="0 0 26 16" fill="none" stroke="#888" strokeWidth="2"><path d="M1 1L13 14L25 1" /></svg>
          </ExpandButton>
        </SwitchLine>
      </AfterHours>

      <TabBar $pad={0}>
        <Tab>分时</Tab>
        <Tab>五日</Tab>
        <Tab $on>日K</Tab>
        <Tab>周K</Tab>
        <Tab>月K</Tab>
        <Tab>更多<Down /></Tab>
        <GearButton aria-label="设置">
          <svg width="48" height="48" viewBox="0 0 48 48" fill="none" stroke="#666" strokeWidth="3" strokeLinejoin="round">
            <path d="M20 2H28L30 8L36 11.500L42 10L46 17L42 21.500V26.500L46 31L42 38L36 36.500L30 40L28 46H20L18 40L12 36.500L6 38L2 31L6 26.500V21.500L2 17L6 10L12 11.500L18 8Z" />
            <circle cx="24" cy="24" r="7.500" />
          </svg>
        </GearButton>
      </TabBar>

      <MaBar>
        <SelectBox>
          <BareSelect aria-label="主图指标"><option>均线</option></BareSelect>
          <Down />
        </SelectBox>
        <MaGrid>
          <MaValue $color={c.ink}>MA5:8.40<Arrow /></MaValue>
          <MaValue $color="#e8bf55">10:8.56<Arrow up /></MaValue>
          <MaValue $color="#ad2080">20:8.38<Arrow up /></MaValue>
          <MaValue $color={c.green}>30:8.18<Arrow up /></MaValue>
          <MaValue $color={c.gray}>60:7.77<Arrow up /></MaValue>
        </MaGrid>
        <ChipRow>
          <Chip>DK点<svg width="10" height="24" viewBox="0 0 10 24"><path d="M10 14V24H0Z" fill="#222" /></svg></Chip>
          <Chip>前复权</Chip>
        </ChipRow>
      </MaBar>

      <Charts>
        <PlotArea>
          <PriceChart />
          <PlotControls>
            {CONTROLS.map((b) => (
              <RoundButton key={b.name} aria-label={b.name} $muted={b.muted}>
                <svg width="30" height="30" viewBox="0 0 30 30" fill="none" stroke="currentColor" strokeWidth="2.400"><path d={b.d} /></svg>
              </RoundButton>
            ))}
          </PlotControls>
          <PriceSeries />
        </PlotArea>
        <VolumeBar>
          <SelectBox $wide>
            <BareSelect aria-label="副图指标"><option>成交额</option></BareSelect>
            <Down />
          </SelectBox>
          <VolumeValue $color={c.ink}>8456万<Arrow /></VolumeValue>
          <VolumeValue $color="#e6c038">MA1:1.59亿<Arrow /></VolumeValue>
          <VolumeValue $color="#b53bc0">MA2:3.36亿<Arrow /></VolumeValue>
          <Collapse aria-label="收起">
            <svg width="16" height="26" viewBox="0 0 16 26" fill="none" stroke="currentColor" strokeWidth="4"><path d="M14 2L3 13L14 24" /></svg>
          </Collapse>
        </VolumeBar>
        <VolumeChart />
        <PlotOverlay viewBox="0 0 1056 613">
          {MARKS.map((m) => (
            <path key={m} d={smoothPath(m)} fill="none" stroke="#fe0000" strokeWidth="10" strokeLinecap="round" strokeLinejoin="round" />
          ))}
        </PlotOverlay>
      </Charts>

      <Banner>
        <svg width="42" height="36" viewBox="0 0 42 36" fill={c.vivid}>
          <path d="M9 11L37 1V35L32 33V31L29 32V34H18L16 28H9Z" /><rect x="1" y="11" width="4" height="15" /><rect x="36" y="0" width="4" height="36" />
        </svg>
        <BannerLink href="#futures">期货T+0，灵活抓行情！立即体验&gt;&gt;</BannerLink>
        <BannerClose aria-label="关闭">
          <svg width="28" height="28" viewBox="0 0 28 28" stroke="#d65d1a" strokeWidth="2.500"><path d="M1 1L27 27M27 1L1 27" /></svg>
        </BannerClose>
      </Banner>

      <TabBar $pad={35}>
        {["股吧", "盘口", "资讯", "公告", "研报", "财务", "资料"].map((t, i) => (
          <Tab key={t} $on={i === 0}>{t}</Tab>
        ))}
      </TabBar>

      <Cards>
        <Card href="#company" $tint="#ecf6ff">
          <svg width="42" height="42" viewBox="0 0 42 42">
            <circle cx="21" cy="21" r="21" fill="#5c8ae6" />
            <path d="M9 20L21 11L33 20M21 17V30M21 23H28M14 22V30M10 30.500H32" fill="none" stroke="#fff" strokeWidth="3" />
          </svg>
          <CardTitle>中元股份<CardNote>18.5万关注</CardNote><ChevronRight /></CardTitle>
          <CardSub>上市公司官方财富号</CardSub>
        </Card>
        <Card href="#rank" $tint="#fff3f3">
          <svg width="42" height="42" viewBox="0 0 42 42">
            <defs><linearGradient id="rank" x1="0" y1="0" x2="0" y2="1"><stop stopColor="#d9534f" /><stop offset="1" stopColor="#ef9a97" /></linearGradient></defs>
            <circle cx="21" cy="21" r="21" fill="url(#rank)" />
            <path d="M10 18H15V31H10ZM27 22H32V31H27Z" fill="#fff" />
            <path d="M17.500 12.500H24.500V29.500H17.500ZM20 17L21.500 16V23" fill="none" stroke="#fff" strokeWidth="2.500" />
          </svg>
          <CardTitle>股票人气榜<CardNote /><ChevronRight /></CardTitle>
          <CardSub>A股即时排名第<Rank>3292</Rank>名</CardSub>
        </Card>
      </Cards>

      <FilterRow>
        <Filter $on>全部</Filter>
        <Filter>热门</Filter>
        <Sorts>
          <Sort $on>最新评论</Sort>
          <Sort>最新发帖</Sort>
        </Sorts>
      </FilterRow>

      <BottomNav>
        <IndexBlock>
          <IndexMark width="18" height="8" viewBox="0 0 18 8"><path d="M9 0L18 7H0Z" fill="#777" /></IndexMark>
          <span>3559.95</span>
          <IndexLine><IndexName>上证</IndexName>-0.37%</IndexLine>
        </IndexBlock>
        {NAV.map((n) => (
          <NavItem key={n.label}>
            <svg width="56" height="54" viewBox="0 0 56 54" fill="none" stroke="currentColor" strokeWidth="2.500">{n.art}</svg>
            {n.label}
          </NavItem>
        ))}
      </BottomNav>
      <HomeBar />

      <Footer>
        <FooterArt width="496" height="236" viewBox="584 2280 496 236" fill="none" stroke="#fef0e5" strokeWidth="2">
          <path d="M592 2427L918 2280M678 2280L848 2430M585 2290L689 2463M744 2516L863 2430M592 2427V2516M592 2460Q780 2430 880 2380M1040 2320L1080 2350M1040 2400L1080 2460M935 2280L890 2310M935 2280L920 2312M935 2280V2312M935 2280L950 2312M935 2280L985 2312M940 2490L930 2516M970 2490V2516M990 2490L1000 2516" />
          <g fill="#feebdf" stroke="none">
            <rect x="683" y="2438" width="34" height="78" /><rect x="698" y="2395" width="4" height="45" />
            <rect x="737" y="2404" width="33" height="57" /><rect x="752" y="2375" width="4" height="128" />
            <rect x="790" y="2315" width="33" height="89" /><rect x="805" y="2290" width="4" height="158" />
            <rect x="844" y="2388" width="34" height="128" />
          </g>
        </FooterArt>
        <FooterText>
          <Brand><Feather size={64} />东方财富</Brand>
          <Slogan>来东方财富，看更多行情信息</Slogan>
        </FooterText>
        <QrCode />
      </Footer>
    </Page>
  );
}
